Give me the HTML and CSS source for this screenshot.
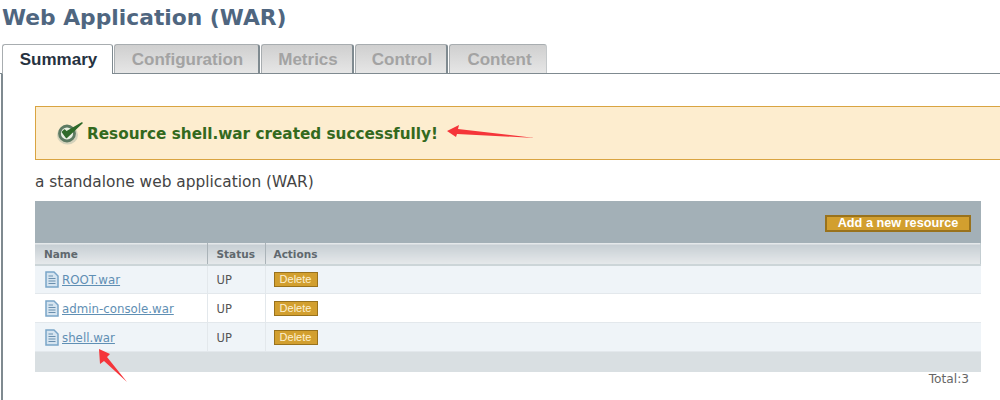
FILE: index.html
```html
<!DOCTYPE html>
<html lang="en">

<head>
  <link rel="stylesheet" href="styles.css">
</head>

<body>
  <h1 class="title">Web Application (WAR)</h1>

  <ul class="tabs">
    <li class="tab tab-active">Summary</li>
    <li class="tab tab-config">Configuration</li>
    <li class="tab tab-metrics">Metrics</li>
    <li class="tab tab-control">Control</li>
    <li class="tab tab-content">Content</li>
  </ul>

  <div class="panel">
    <div class="message">
      <svg class="check" viewBox="0 0 27 24">
        <ellipse cx="11.500" cy="14" rx="10.500" ry="9.500" fill="#b9bfae" opacity="0.6" />
        <circle cx="11" cy="12.500" r="7.500" fill="#e9efe2" stroke="#5d7a62" stroke-width="2.800" />
        <path d="M6.500 11 L10.500 16.500 L26 2 L10.500 11 L8.500 9 Z" fill="#2f6a2a" stroke="#2f6a2a" stroke-width="1.500" stroke-linejoin="round" />
      </svg>
      <span class="message-text">Resource shell.war created successfully!</span>
    </div>

    <p class="desc">a standalone web application (WAR)</p>

    <div class="table-wrap">
      <div class="toolbar">
        <button class="btn btn-add">Add a new resource</button>
      </div>
      <table class="list">
        <thead>
          <tr>
            <th class="col-name">Name</th>
            <th class="col-status">Status</th>
            <th>Actions</th>
          </tr>
        </thead>
        <tbody>
          <tr class="odd">
            <td>
              <div class="name-cell">
                <svg class="file" viewBox="0 0 14 17">
                  <path d="M1 1 H9 L13 5 V16 H1 Z" fill="#d5e4f0" stroke="#7aa5c8" stroke-width="1.500" />
                  <path d="M3.500 5 H8 M3.500 7.500 H10.500 M3.500 10 H10.500 M3.500 12.500 H10.500" stroke="#6a8fae" stroke-width="1.200" />
                </svg>
                <a href="#">ROOT.war</a>
              </div>
            </td>
            <td>UP</td>
            <td><button class="btn btn-del">Delete</button></td>
          </tr>
          <tr>
            <td>
              <div class="name-cell">
                <svg class="file" viewBox="0 0 14 17">
                  <path d="M1 1 H9 L13 5 V16 H1 Z" fill="#d5e4f0" stroke="#7aa5c8" stroke-width="1.500" />
                  <path d="M3.500 5 H8 M3.500 7.500 H10.500 M3.500 10 H10.500 M3.500 12.500 H10.500" stroke="#6a8fae" stroke-width="1.200" />
                </svg>
                <a href="#">admin-console.war</a>
              </div>
            </td>
            <td>UP</td>
            <td><button class="btn btn-del">Delete</button></td>
          </tr>
          <tr class="odd">
            <td>
              <div class="name-cell">
                <svg class="file" viewBox="0 0 14 17">
                  <path d="M1 1 H9 L13 5 V16 H1 Z" fill="#d5e4f0" stroke="#7aa5c8" stroke-width="1.500" />
                  <path d="M3.500 5 H8 M3.500 7.500 H10.500 M3.500 10 H10.500 M3.500 12.500 H10.500" stroke="#6a8fae" stroke-width="1.200" />
                </svg>
                <a href="#">shell.war</a>
              </div>
            </td>
            <td>UP</td>
            <td><button class="btn btn-del">Delete</button></td>
          </tr>
        </tbody>
      </table>
      <div class="table-foot"></div>
      <div class="total">Total:3</div>
    </div>
  </div>

  <!-- red annotation arrows drawn over the screenshot -->
  <svg class="arrow arrow-msg" viewBox="0 0 90 20">
    <path d="M0 6 L12 0 L11 4 L88 13 L10 9 L9 12 Z" fill="#f5353a" />
  </svg>
  <svg class="arrow arrow-row" viewBox="0 0 32 34">
    <path d="M1 0 L12 5 L9 8 L29 33 L6 12 L2 15 Z" fill="#f5353a" />
  </svg>
</body>

</html>
```

FILE: styles.css
```css
* {
  box-sizing: border-box;
}

html,
body {
  margin: 0;
  height: 400px;
  overflow: hidden;
}

body {
  position: relative;
  background: #fff;
  font-family: "DejaVu Sans", sans-serif;
  color: #333;
}

.title {
  margin: 0;
  padding: 5px 0 0 2px;
  height: 44px;
  font-size: 21.800px;
  line-height: 26px;
  font-weight: bold;
  color: #4f6680;
}

.tabs {
  display: flex;
  list-style: none;
  margin: 0;
  padding: 0 0 0 2px;
  height: 30px;
  border-bottom: 1px solid #7f8a90;
}

.tab {
  height: 29px;
  margin-right: 1px;
  padding-left: 2px;
  font-family: "Liberation Sans", sans-serif;
  font-size: 17px;
  font-weight: bold;
  line-height: 29px;
  text-align: center;
  color: #a3a3a3;
  background: linear-gradient(#cfcfcf, #e6e6e6);
  border: 1px solid #a8adb0;
  border-right: 2px solid #7f8a90;
  border-bottom: 0;
  border-radius: 3px 3px 0 0;
}

.tab-active {
  width: 111px;
  height: 30px;
  color: #26323f;
  background: #fff;
  border-right: 1px solid #7f8a90;
  position: relative;
}

.tab-config {
  width: 146px;
}

.tab-metrics {
  width: 93px;
}

.tab-control {
  width: 93px;
}

.tab-content {
  width: 98px;
  padding-left: 3px;
  border-right: 1px solid #c4c8ca;
}

.panel {
  margin-left: 1px;
  height: 326px;
  padding: 32px 0 0 32px;
  border-left: 2px solid #7f8a90;
}

.message {
  display: flex;
  align-items: center;
  gap: 4px;
  height: 54px;
  padding: 0 0 0 20px;
  background: #fdedcf;
  border: 1px solid #d9a441;
  border-right: 0;
  font-size: 15.250px;
  font-weight: bold;
  color: #33691e;
}

.message-text {
  padding-top: 2px;
}

.check {
  width: 27px;
  height: 24px;
  flex: none;
}

.desc {
  margin: 0;
  padding-top: 13px;
  height: 41px;
  font-size: 15.400px;
  line-height: 18px;
  color: #444;
}

.table-wrap {
  width: 946px;
}

.toolbar {
  display: flex;
  justify-content: flex-end;
  align-items: center;
  height: 42px;
  padding: 2px 10px 0 0;
  background: #a3b0b7;
}

.btn {
  font-family: "Liberation Sans", sans-serif;
  color: #fff;
  background: #d29f2f;
  border: 1px solid #99721c;
  padding: 0;
}

.btn-add {
  width: 146px;
  height: 17px;
  font-size: 12.700px;
  font-weight: bold;
  line-height: 13px;
  border-width: 2px;
}

.btn-del {
  display: block;
  width: 44px;
  height: 15px;
  font-size: 11px;
  line-height: 13px;
  color: #fdf0cf;
}

.list {
  width: 100%;
  border-collapse: collapse;
  table-layout: fixed;
  font-size: 11.500px;
}

.list th {
  height: 21px;
  padding: 0 0 0 9px;
  text-align: left;
  font-size: 10.500px;
  font-weight: bold;
  color: #60686e;
  background: linear-gradient(#c6ced3, #e6e9eb);
  border-top: 1px solid #e4e8ea;
  border-bottom: 2px solid #ccd5d8;
  border-right: 1px solid #aab3b8;
}

.list th:last-child {
  padding-left: 8px;
  border-right: 1px solid #c3cdd1;
}

.col-name {
  width: 172px;
}

.col-status {
  width: 58px;
}

.list td {
  height: 29px;
  padding: 1px 0 0 9px;
  color: #555;
  border-right: 1px solid #e3e8ec;
  border-bottom: 1px solid #e3e8ec;
}

.list td:last-child {
  padding-left: 8px;
  border-right: 0;
}

.list tr.odd td {
  background: #eff4f8;
}

.name-cell {
  display: flex;
  align-items: center;
  gap: 3px;
  padding-left: 1px;
}

.file {
  width: 14px;
  height: 17px;
  flex: none;
}

.name-cell a {
  color: #5f8fb4;
  font-size: 11.800px;
}

.table-foot {
  height: 20px;
  background: #d9dfe2;
}

.total {
  padding: 0 12px 0 0;
  height: 16px;
  text-align: right;
  font-size: 12.200px;
  line-height: 14px;
  color: #666;
}

.arrow {
  position: absolute;
}

.arrow-msg {
  left: 447px;
  top: 125px;
  width: 90px;
  height: 20px;
}

.arrow-row {
  left: 98px;
  top: 349px;
  width: 32px;
  height: 34px;
}
```
